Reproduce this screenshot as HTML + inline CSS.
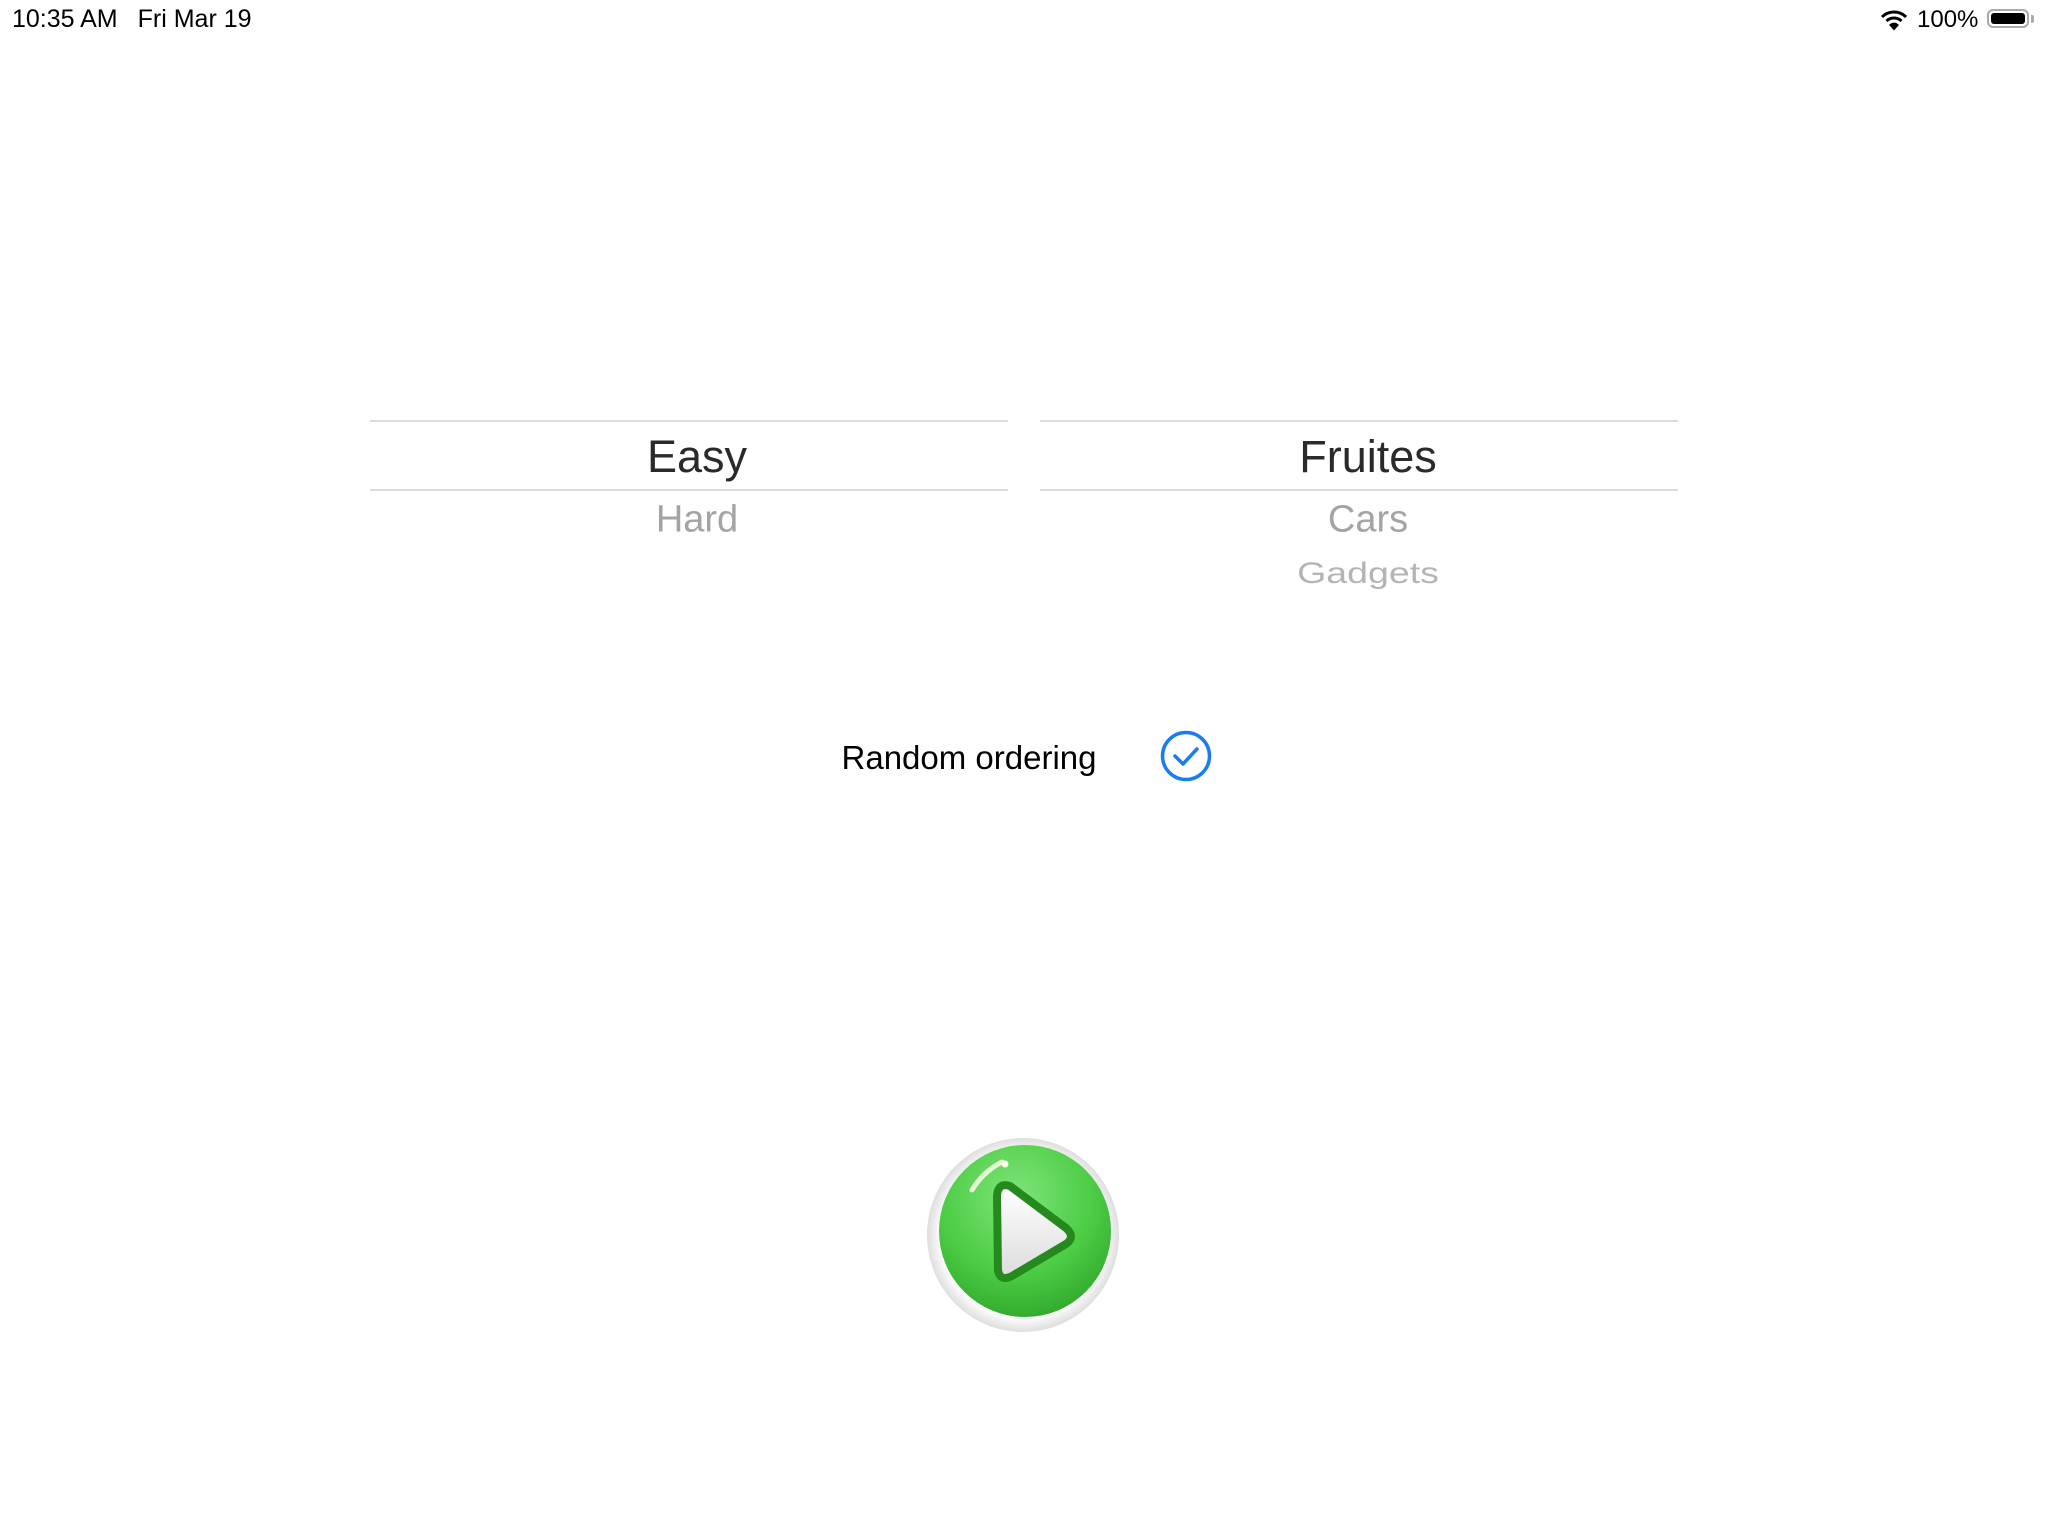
<!DOCTYPE html>
<html><head><meta charset="utf-8"><style>
html,body{margin:0;padding:0;background:#fff;width:2048px;height:1536px;overflow:hidden;position:relative;font-family:"Liberation Sans",sans-serif}
.a{position:absolute;white-space:nowrap}
.line{position:absolute;height:2px;background:#dcdcdc}
.c{transform:translate(-50%,-50%)}
</style></head><body>
<div class="a" style="left:12px;top:5px;font-size:25px;color:#000">10:35 AM<span style="display:inline-block;width:20px"></span>Fri Mar 19</div>
<svg class="a" style="left:1880px;top:9px" width="28" height="22" viewBox="0 0 28 22">
<path d="M2 8 A17 17 0 0 1 26 8" stroke="#000" stroke-width="3" fill="none"/>
<path d="M6.5 12 A11 11 0 0 1 21.5 12" stroke="#000" stroke-width="3" fill="none"/>
<path d="M10.5 16 A5 5 0 0 1 17.5 16 L14 20 Z" fill="#000" stroke="#000" stroke-width="2"/>
</svg>
<div class="a" style="left:1917px;top:6px;font-size:24px;color:#000">100%</div>
<div class="a" style="left:1987px;top:9px;width:42px;height:19px;border:2px solid #aaa;border-radius:6px;box-sizing:border-box;padding:2px"><div style="width:100%;height:100%;background:#000;border-radius:3px"></div></div>
<div class="a" style="left:2031px;top:15px;width:3px;height:8px;background:#aaa;border-radius:0 2px 2px 0"></div>

<div class="line" style="left:370px;width:638px;top:420px"></div>
<div class="line" style="left:370px;width:638px;top:489px"></div>
<div class="line" style="left:1040px;width:638px;top:420px"></div>
<div class="line" style="left:1040px;width:638px;top:489px"></div>

<div class="a c" style="left:697px;top:457px;font-size:45px;color:#2a2a2a">Easy</div>
<div class="a c" style="left:697px;top:520px;font-size:38px;color:#a4a4a4">Hard</div>
<div class="a c" style="left:1368px;top:457px;font-size:45px;color:#2a2a2a">Fruites</div>
<div class="a c" style="left:1368px;top:520px;font-size:38px;color:#a4a4a4">Cars</div>
<div class="a c" style="left:1368px;top:574px;font-size:30px;color:#b4b4b4;transform:translate(-50%,-50%) scaleX(1.25)">Gadgets</div>

<div class="a c" style="left:969px;top:758px;font-size:33px;color:#000">Random ordering</div>
<svg class="a" style="left:1158px;top:728px" width="56" height="56" viewBox="0 0 56 56">
<circle cx="28" cy="28" r="23.5" stroke="#1a7cf5" stroke-width="3.5" fill="none"/>
<path d="M17 28 L25 36 L39 21" stroke="#1a7cf5" stroke-width="3.5" fill="none" stroke-linecap="round" stroke-linejoin="round"/>
</svg>

<svg class="a" style="left:920px;top:1130px" width="210" height="210" viewBox="920 1130 210 210">
<defs>
<radialGradient id="g" cx="0.45" cy="0.3" r="0.75">
<stop offset="0" stop-color="#7ee57a"/><stop offset="0.6" stop-color="#4ccc44"/><stop offset="1" stop-color="#2ea62a"/>
</radialGradient>
<linearGradient id="t" x1="0" y1="0" x2="0" y2="1"><stop offset="0" stop-color="#fff"/><stop offset="1" stop-color="#dcdcdc"/></linearGradient>
<radialGradient id="r" cx="0.5" cy="0.5" r="0.5"><stop offset="0.85" stop-color="#fff"/><stop offset="1" stop-color="#dedede"/></radialGradient>
</defs>
<ellipse cx="1023" cy="1235" rx="96" ry="97" fill="url(#r)"/>
<circle cx="1025" cy="1231" r="86" fill="url(#g)"/>
<path d="M1002 1162 A75 75 0 0 0 972 1190" stroke="#fffbe8" stroke-width="5" fill="none" stroke-linecap="round" opacity="0.85"/>
<circle cx="1005" cy="1164" r="3.5" fill="#fffbe8"/>
<path d="M1010 1186 Q998 1182 997 1196 L998 1270 Q1000 1282 1012 1276 L1066 1244 Q1076 1237 1066 1228 Z" fill="url(#t)" stroke="#248a1e" stroke-width="8" stroke-linejoin="round"/>
</svg>
</body></html>
